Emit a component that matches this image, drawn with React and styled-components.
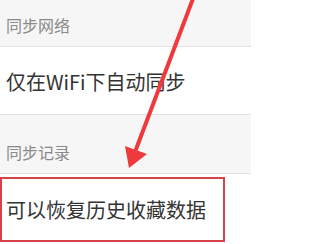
import styled, { createGlobalStyle } from "styled-components";

const GlobalStyle = createGlobalStyle`
  html, body {
    margin: 0;
    padding: 0;
    background: #ffffff;
  }
  body {
    font-family: "Noto Sans CJK SC", "Noto Sans", sans-serif;
  }
`;

const Screen = styled.div`
  position: relative;
  width: 251px;
  height: 244px;
  overflow: hidden;
  display: flex;
  flex-direction: column;
`;

const SectionHeader = styled.div`
  height: ${(p) => p.$height}px;
  display: flex;
  align-items: flex-end;
  padding: 0 0 11px 6px;
  box-sizing: border-box;
  background: #f6f6f6;
  border-bottom: 1px solid #e2e2e2;
  color: #8a8a8a;
  font-size: 16px;
  line-height: 20px;
  flex-shrink: 0;
`;

const Row = styled.div`
  height: 68px;
  display: flex;
  align-items: center;
  padding-left: 6px;
  padding-top: 2px;
  box-sizing: border-box;
  background: #ffffff;
  border-bottom: ${(p) => (p.$last ? "none" : "1px solid #e2e2e2")};
  color: #333333;
  font-size: 20px;
  flex-shrink: 0;
`;

const Highlight = styled.div`
  position: absolute;
  left: 0;
  top: 177px;
  width: 225px;
  height: 65px;
  box-sizing: border-box;
  border: 2px solid #d8414a;
  pointer-events: none;
`;

const Arrow = styled.svg`
  position: absolute;
  left: 0;
  top: 0;
  pointer-events: none;
`;

export default function App() {
  return (
    <>
      <GlobalStyle />
      <Screen>
        <SectionHeader $height={47}>同步网络</SectionHeader>
        <Row>仅在WiFi下自动同步</Row>
        <SectionHeader $height={59}>同步记录</SectionHeader>
        <Row $last>可以恢复历史收藏数据</Row>
        <Highlight />
        <Arrow width="251" height="244" viewBox="0 0 251 244">
          <line
            x1="194"
            y1="-4"
            x2="135"
            y2="152"
            stroke="#ee3a3c"
            strokeWidth="4"
          />
          <polygon points="129,168 125,146 147,154" fill="#ee3a3c" />
        </Arrow>
      </Screen>
    </>
  );
}
